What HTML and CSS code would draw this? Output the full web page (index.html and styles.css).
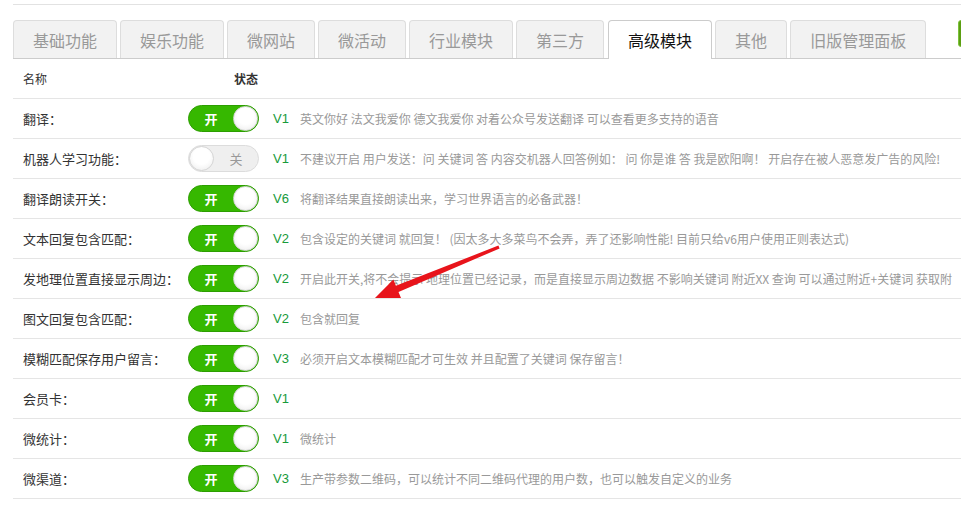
FILE: index.html
```html
<!DOCTYPE html>
<html lang="zh-CN">
<head>
    <meta charset="UTF-8">
    <meta name="viewport" content="width=device-width, initial-scale=1.0">
    <title>高级模块</title>
    <link rel="stylesheet" href="styles.css">
</head>
<body>
<div class="page">
    <div class="topline"></div>

    <ul class="tabs">
        <li class="tab">基础功能</li>
        <li class="tab">娱乐功能</li>
        <li class="tab">微网站</li>
        <li class="tab">微活动</li>
        <li class="tab">行业模块</li>
        <li class="tab">第三方</li>
        <li class="tab active">高级模块</li>
        <li class="tab">其他</li>
        <li class="tab">旧版管理面板</li>
        <li class="tab-btn"></li>
    </ul>

    <div class="list">
        <div class="row head">
            <div class="name">名称</div>
            <div class="state">状态</div>
        </div>
        <div class="row">
            <div class="name">翻译：</div>
            <div class="sw-cell"><span class="switch on"><em>开</em><i></i></span></div>
            <div class="ver">V1</div>
            <div class="desc">英文你好 法文我爱你 德文我爱你 对着公众号发送翻译 可以查看更多支持的语音</div>
        </div>
        <div class="row">
            <div class="name">机器人学习功能：</div>
            <div class="sw-cell"><span class="switch off"><i></i><em>关</em></span></div>
            <div class="ver">V1</div>
            <div class="desc">不建议开启 用户发送：问 关键词 答 内容交机器人回答例如： 问 你是谁 答 我是欧阳啊！ 开启存在被人恶意发广告的风险!</div>
        </div>
        <div class="row">
            <div class="name">翻译朗读开关：</div>
            <div class="sw-cell"><span class="switch on"><em>开</em><i></i></span></div>
            <div class="ver">V6</div>
            <div class="desc">将翻译结果直接朗读出来，学习世界语言的必备武器！</div>
        </div>
        <div class="row">
            <div class="name">文本回复包含匹配：</div>
            <div class="sw-cell"><span class="switch on"><em>开</em><i></i></span></div>
            <div class="ver">V2</div>
            <div class="desc">包含设定的关键词 就回复！ (因太多大多菜鸟不会弄，弄了还影响性能! 目前只给v6用户使用正则表达式)</div>
        </div>
        <div class="row">
            <div class="name">发地理位置直接显示周边：</div>
            <div class="sw-cell"><span class="switch on"><em>开</em><i></i></span></div>
            <div class="ver">V2</div>
            <div class="desc">开启此开关,将不会提示 地理位置已经记录，而是直接显示周边数据 不影响关键词 附近XX 查询 可以通过附近+关键词 获取附</div>
        </div>
        <div class="row">
            <div class="name">图文回复包含匹配：</div>
            <div class="sw-cell"><span class="switch on"><em>开</em><i></i></span></div>
            <div class="ver">V2</div>
            <div class="desc">包含就回复</div>
        </div>
        <div class="row">
            <div class="name">模糊匹配保存用户留言：</div>
            <div class="sw-cell"><span class="switch on"><em>开</em><i></i></span></div>
            <div class="ver">V3</div>
            <div class="desc">必须开启文本模糊匹配才可生效 并且配置了关键词 保存留言！</div>
        </div>
        <div class="row">
            <div class="name">会员卡：</div>
            <div class="sw-cell"><span class="switch on"><em>开</em><i></i></span></div>
            <div class="ver">V1</div>
            <div class="desc"></div>
        </div>
        <div class="row">
            <div class="name">微统计：</div>
            <div class="sw-cell"><span class="switch on"><em>开</em><i></i></span></div>
            <div class="ver">V1</div>
            <div class="desc">微统计</div>
        </div>
        <div class="row">
            <div class="name">微渠道：</div>
            <div class="sw-cell"><span class="switch on"><em>开</em><i></i></span></div>
            <div class="ver">V3</div>
            <div class="desc">生产带参数二维码，可以统计不同二维码代理的用户数，也可以触发自定义的业务</div>
        </div>
    </div>

    <!-- 标注箭头 -->
    <svg class="arrow" width="961" height="526" viewBox="0 0 961 526">
        <polygon fill="#e8141b" points="498.4,241.6 395.9,281.7 393.4,275.6 375,294 401,294.1 398.5,288.1 499.6,244.4"/>
    </svg>
</div>
</body>
</html>
```

FILE: styles.css
```css
body {
    margin: 0;
    font-family: "Noto Sans CJK SC", "Microsoft YaHei", sans-serif;
    background-color: #fff;
    color: #333;
    overflow: hidden;
}

.page {
    position: relative;
    padding-left: 13px;
}

.topline {
    margin-top: 4px;
    border-top: 1px solid #e2e2e2;
}

/* 选项卡 */
.tabs {
    list-style: none;
    margin: 15px 0 0;
    padding: 0;
    display: flex;
    gap: 3px;
    border-bottom: 1px solid #ccc;
    height: 38px;
    white-space: nowrap;
}

.tab {
    flex-shrink: 0;
    height: 38px;
    padding: 0 19px;
    border: 1px solid #ddd;
    border-bottom: none;
    border-radius: 4px 4px 0 0;
    background-color: #f2f2f2;
    color: #999;
    font-size: 16px;
    line-height: 38px;
    box-sizing: border-box;
}

.tab.active {
    height: 39px;
    margin-left: 1px;
    background-color: #fff;
    border-color: #ccc;
    color: #111;
}

.tab-btn {
    flex-shrink: 0;
    width: 40px;
    height: 25px;
    margin-left: 29px;
    border: 1px solid #7cc23a;
    border-radius: 3px;
    background-color: #5b9e12;
}

/* 列表 */
.row {
    display: flex;
    align-items: center;
    height: 39px;
    border-bottom: 1px solid #e5e5e5;
    white-space: nowrap;
}

.name {
    flex-shrink: 0;
    width: 165px;
    padding-left: 10px;
    font-size: 13px;
}

.head .name { font-size: 12px; }

.state {
    padding-left: 46px;
    font-size: 12px;
    font-weight: bold;
}

.sw-cell {
    flex-shrink: 0;
    width: 85px;
    display: flex;
}

.switch {
    display: flex;
    align-items: center;
    width: 69px;
    height: 25px;
    border-radius: 14px;
    border: 1px solid;
}

.switch em {
    flex: 1;
    font-style: normal;
    font-size: 13px;
    text-align: center;
    line-height: 25px;
}

.switch i {
    width: 23px;
    height: 23px;
    border-radius: 50%;
    border: 1px solid #d5d5d5;
    background: radial-gradient(circle at 50% 40%, #fff 45%, #e9e9e9 100%);
}

.switch.on {
    background-color: #36b800;
    border-color: #2c9e00;
}

.switch.on em {
    color: #fff;
    font-weight: bold;
}

.switch.off {
    background-color: #efefef;
    border-color: #dcdcdc;
}

.switch.off em { color: #999; }

.ver {
    flex-shrink: 0;
    width: 27px;
    font-family: "Liberation Sans", Arial, sans-serif;
    font-size: 13px;
    color: #179a3a;
}

.desc {
    font-size: 12px;
    color: #999;
}

.arrow {
    position: absolute;
    left: 0;
    top: 0;
    pointer-events: none;
}
```
